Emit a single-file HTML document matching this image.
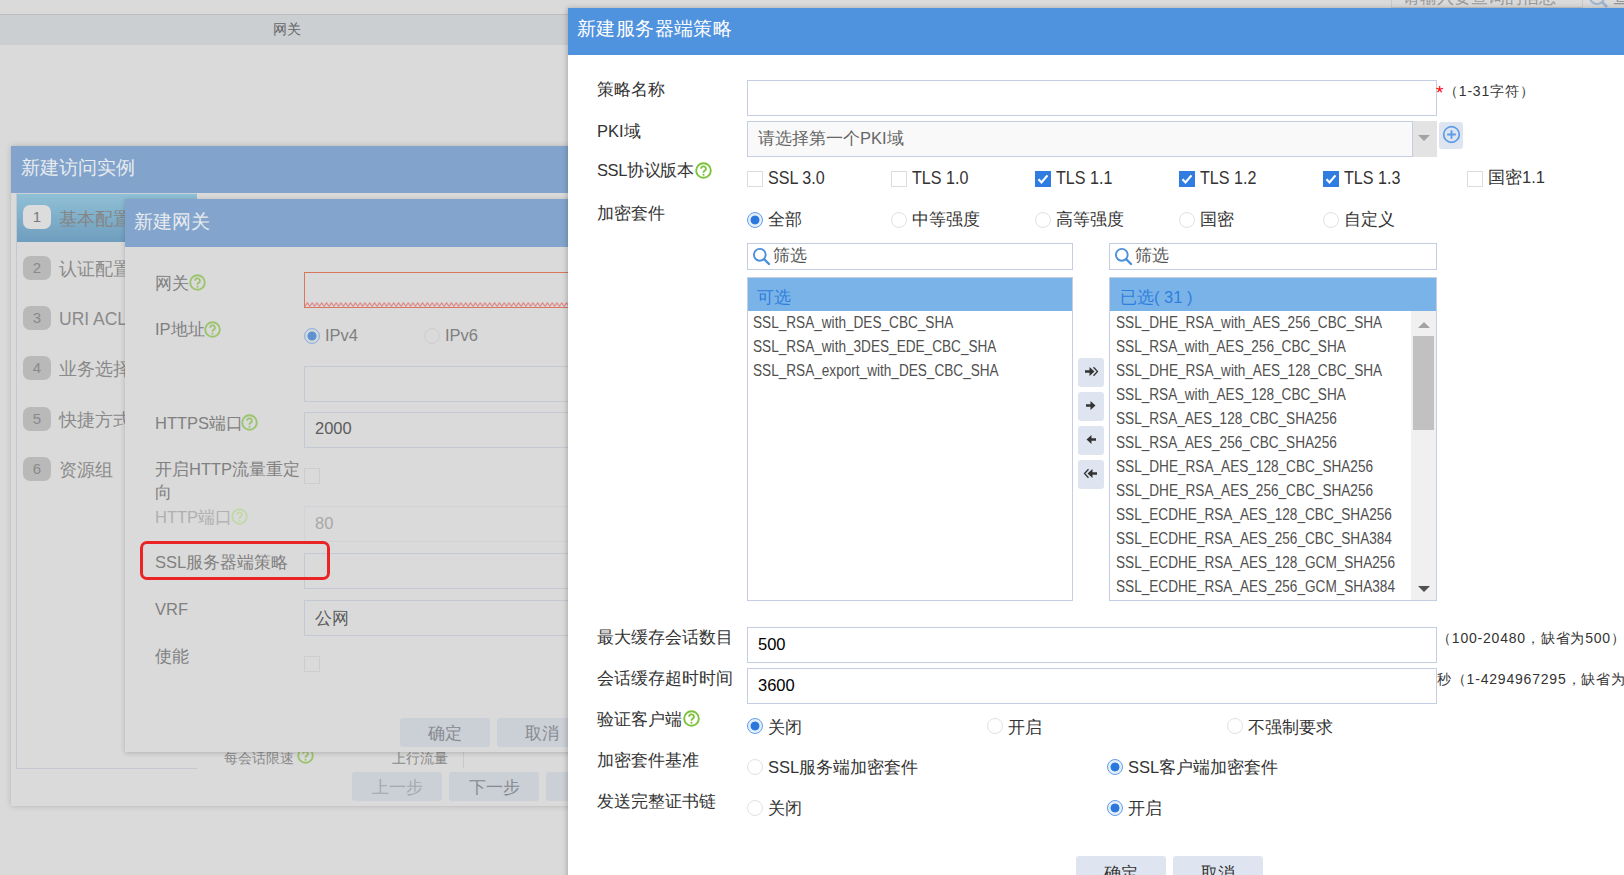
<!DOCTYPE html>
<html><head><meta charset="utf-8">
<style>
*{box-sizing:border-box;margin:0;padding:0}
html,body{width:1624px;height:875px;overflow:hidden;background:#dadada;font-family:"Liberation Sans",sans-serif}
.a{position:absolute;white-space:nowrap}
.t{position:absolute;white-space:nowrap;line-height:20px}
/* masked background */
.bgline{left:0;top:14px;width:1624px;height:1px;background:#bcbec0}
.band{left:0;top:15px;width:1624px;height:30px;background:#cbcfd2}
.dlg1{left:11px;top:146px;width:600px;height:660px;background:#dadada;box-shadow:0 0 6px rgba(0,0,0,.18)}
.hdr1{left:11px;top:146px;width:600px;height:47px;background:#82a4cc}
.mtitle{font-size:19.2px;color:#e8ebef}
.step{left:17px;top:194px;width:180px;height:48px;background:linear-gradient(#90c0d6,#6f9dbe)}
.badge{position:absolute;left:23px;width:28px;height:24px;border-radius:7px;background:#b9b9b9;color:#8a8a8a;font-size:15px;line-height:24px;text-align:center}
.stxt{font-size:17.5px;color:#8a8a8a;left:59px}
.dlg2{left:125px;top:199px;width:500px;height:553px;background:#dadada;box-shadow:0 1px 5px rgba(0,0,0,.2)}
.hdr2{left:125px;top:199px;width:500px;height:48px;background:#83a5cd}
.ml{font-size:16.5px;color:#808080;left:155px}
.minp{position:absolute;left:304px;width:300px;height:36px;border:1px solid #c3c8d2;background:#dadada}
.help{position:absolute;width:17px;height:17px;border-radius:50%;border:2px solid #9cc36e;color:#9cc36e;font-size:12px;line-height:13px;text-align:center;font-weight:bold}
.help:empty::after{content:"?"}
.mbtn{position:absolute;height:29px;border-radius:3px;background:#cbcfd6;color:#868a90;font-size:17px;line-height:31px;text-align:center}
/* main dialog */
.dlg{left:568px;top:8px;width:1100px;height:900px;background:#fff;box-shadow:-1px 0 5px rgba(0,0,0,.22)}
.hdr{left:568px;top:8px;width:1100px;height:47px;background:#4f92de}
.lbl{font-size:16.5px;color:#333;left:597px}
.inp{position:absolute;left:747px;width:690px;height:36px;border:1px solid #c5cde3;background:#fff}
.cb{position:absolute;width:16px;height:16px;border:1px solid #dcdcdc;background:#fff}
.cb.on{background:#2f7de1;border-color:#2f7de1}
.rd{position:absolute;width:16px;height:16px;border-radius:50%;border:1px solid #e2e2e2;background:#fff}
.rd.on{border:1.8px solid #629ee8;background:radial-gradient(circle,#2b78dd 0,#2b78dd 4.1px,#e4eefb 4.8px)}
.opt{font-size:16.5px;color:#333}
.filt{position:absolute;top:243px;height:27px;border:1px solid #c5cde3;background:#fff}
.list{position:absolute;top:277px;height:324px;border:1px solid #c5cde3;background:#fff;overflow:hidden}
.lh{position:absolute;left:-1px;top:-1px;right:-1px;height:34px;background:#7ab3e8}
.li{font-size:16px;color:#505050;transform:scaleX(0.85);transform-origin:0 0;margin-top:1px}
.abtn{position:absolute;left:1078px;width:26px;height:29px;border-radius:3px;background:#dfe5f0}
.btn{position:absolute;top:856px;width:90px;height:32px;border-radius:3px;background:#dfe5f0;color:#333;font-size:17px;text-align:center;line-height:36px}
.hint{font-size:14px;color:#333;letter-spacing:0.8px}
</style></head><body>
<!-- background page -->
<div class="a bgline"></div>
<div class="a band"></div>
<div class="t" style="left:273px;top:20px;font-size:13.5px;color:#666">网关</div>



<!-- top right search remnants -->
<div class="a" style="left:1391px;top:-4px;width:192px;height:12px;border:1px solid #c8c8c8;background:#dadada"></div>
<div class="t" style="left:1403px;top:-13px;font-size:16.5px;color:#9a9a9a">请输入要查询的信息</div>
<svg class="a" style="left:1587px;top:-12px" width="22" height="22" viewBox="0 0 22 22"><circle cx="10" cy="9" r="7" fill="none" stroke="#9db4d0" stroke-width="2"/><path d="M15 14l5 5" stroke="#9db4d0" stroke-width="2.5"/></svg>
<div class="t" style="left:1613px;top:-13px;font-size:16.5px;color:#8a8a8a">查询</div>
<div class="a" style="left:1582px;top:-4px;width:1px;height:12px;background:#c8c8c8"></div>

<!-- dialog 1 -->
<div class="a dlg1"></div>
<div class="a hdr1"></div>
<div class="t mtitle" style="left:21px;top:158px">新建访问实例</div>
<div class="a" style="left:16px;top:193px;width:1px;height:576px;background:#c4c7d1"></div>
<div class="a" style="left:16px;top:768px;width:181px;height:1px;background:#c4c7d1"></div>
<div class="a" style="left:17px;top:193px;width:180px;height:1px;background:#c9d2db"></div>
<div class="a step"></div>
<div class="badge" style="top:205px;background:#dcdcdc;color:#7a7a7a">1</div>
<div class="t stxt" style="top:209px;color:#858585">基本配置</div>
<div class="badge" style="top:256px">2</div><div class="t stxt" style="top:259px">认证配置</div>
<div class="badge" style="top:306px">3</div><div class="t stxt" style="top:309px">URI ACL</div>
<div class="badge" style="top:356px">4</div><div class="t stxt" style="top:359px">业务选择</div>
<div class="badge" style="top:407px">5</div><div class="t stxt" style="top:410px">快捷方式</div>
<div class="badge" style="top:457px">6</div><div class="t stxt" style="top:460px">资源组</div>
<div class="t" style="left:224px;top:748px;font-size:14px;color:#8a8a8a">每会话限速</div>
<svg class="a" style="left:297px;top:747px" width="17" height="17" viewBox="0 0 17 17"><circle cx="8.5" cy="8.5" r="7.3" fill="none" stroke="#9cc36e" stroke-width="1.9"/><path d="M6.1 6.7a2.4 2.4 0 1 1 3.4 2.2c-.75.4-1 .8-1 1.6v.3" fill="none" stroke="#9cc36e" stroke-width="1.8"/><circle cx="8.5" cy="12.7" r="1.05" fill="#9cc36e"/></svg>
<div class="t" style="left:392px;top:748px;font-size:14px;color:#8a8a8a">上行流量</div>
<div class="a" style="left:463px;top:751px;width:1px;height:17px;background:#c6c9ce"></div>
<div class="mbtn" style="left:352px;top:772px;width:90px;color:#a5a9ae">上一步</div>
<div class="mbtn" style="left:449px;top:772px;width:90px">下一步</div>
<div class="mbtn" style="left:546px;top:772px;width:89px"></div>

<!-- dialog 2 -->
<div class="a dlg2"></div>
<div class="a hdr2"></div>
<div class="t mtitle" style="left:134px;top:212px">新建网关</div>
<div class="t ml" style="top:273px">网关</div>
<svg class="a" style="left:189px;top:274px" width="17" height="17" viewBox="0 0 17 17"><circle cx="8.5" cy="8.5" r="7.3" fill="none" stroke="#9cc36e" stroke-width="1.9"/><path d="M6.1 6.7a2.4 2.4 0 1 1 3.4 2.2c-.75.4-1 .8-1 1.6v.3" fill="none" stroke="#9cc36e" stroke-width="1.8"/><circle cx="8.5" cy="12.7" r="1.05" fill="#9cc36e"/></svg>
<div class="minp" style="top:272px;border-color:#d8765e;height:36px"></div>
<svg class="a" style="left:305px;top:302px" width="263" height="5" viewBox="0 0 263 5"><defs><pattern id="wv" width="4.8" height="5" patternUnits="userSpaceOnUse"><path d="M0 4.5L2.4 0.8L4.8 4.5" fill="none" stroke="#e07878" stroke-width="1"/></pattern></defs><rect width="263" height="5" fill="url(#wv)"/></svg>
<div class="t ml" style="top:319px">IP地址</div>
<svg class="a" style="left:204px;top:321px" width="17" height="17" viewBox="0 0 17 17"><circle cx="8.5" cy="8.5" r="7.3" fill="none" stroke="#9cc36e" stroke-width="1.9"/><path d="M6.1 6.7a2.4 2.4 0 1 1 3.4 2.2c-.75.4-1 .8-1 1.6v.3" fill="none" stroke="#9cc36e" stroke-width="1.8"/><circle cx="8.5" cy="12.7" r="1.05" fill="#9cc36e"/></svg>
<div class="a" style="left:304px;top:328px;width:16px;height:16px;border-radius:50%;border:1.5px solid #8fb0d9;background:radial-gradient(circle,#5d91d2 0,#5d91d2 4.2px,#dadada 4.9px,#dadada 5.6px,#c8d4e3 6.3px)"></div>
<div class="t ml" style="left:325px;top:325px">IPv4</div>
<div class="a" style="left:424px;top:328px;width:16px;height:16px;border-radius:50%;border:1px solid #cfcfcf"></div>
<div class="t ml" style="left:445px;top:325px">IPv6</div>
<div class="minp" style="top:366px"></div>
<div class="t ml" style="top:413px">HTTPS端口</div>
<svg class="a" style="left:241px;top:414px" width="17" height="17" viewBox="0 0 17 17"><circle cx="8.5" cy="8.5" r="7.3" fill="none" stroke="#9cc36e" stroke-width="1.9"/><path d="M6.1 6.7a2.4 2.4 0 1 1 3.4 2.2c-.75.4-1 .8-1 1.6v.3" fill="none" stroke="#9cc36e" stroke-width="1.8"/><circle cx="8.5" cy="12.7" r="1.05" fill="#9cc36e"/></svg>
<div class="minp" style="top:412px"></div>
<div class="t" style="left:315px;top:418px;font-size:16.5px;color:#5c5c5c">2000</div>
<div class="t ml" style="top:459px">开启HTTP流量重定</div>
<div class="t ml" style="top:482px">向</div>
<div class="a" style="left:304px;top:468px;width:16px;height:16px;border:1px solid #cdcdcd"></div>
<div class="t ml" style="top:507px;color:#b0b0b0">HTTP端口</div>
<svg class="a" style="left:231px;top:508px" width="17" height="17" viewBox="0 0 17 17"><circle cx="8.5" cy="8.5" r="7.3" fill="none" stroke="#c2d8a8" stroke-width="1.9"/><path d="M6.1 6.7a2.4 2.4 0 1 1 3.4 2.2c-.75.4-1 .8-1 1.6v.3" fill="none" stroke="#c2d8a8" stroke-width="1.8"/><circle cx="8.5" cy="12.7" r="1.05" fill="#c2d8a8"/></svg>
<div class="minp" style="top:506px;border-color:#d0d3d8"></div>
<div class="t" style="left:315px;top:513px;font-size:16.5px;color:#a8a8a8">80</div>
<div class="t ml" style="top:552px">SSL服务器端策略</div>
<div class="minp" style="top:553px;height:36px"></div>
<div class="t ml" style="top:599px">VRF</div>
<div class="minp" style="top:600px"></div>
<div class="t" style="left:315px;top:608px;font-size:16.5px;color:#5c5c5c">公网</div>
<div class="t ml" style="top:646px">使能</div>
<div class="a" style="left:304px;top:656px;width:16px;height:16px;border:1px solid #cdcdcd"></div>
<div class="mbtn" style="left:400px;top:718px;width:90px">确定</div>
<div class="mbtn" style="left:497px;top:718px;width:90px">取消</div>
<div class="a" style="left:140px;top:541px;width:190px;height:39px;border:3px solid #ea2424;border-radius:7px"></div>

<!-- main dialog -->
<div class="a dlg"></div>
<div class="a hdr"></div>
<div class="t" style="left:577px;top:19px;font-size:19px;letter-spacing:0.4px;color:#fff">新建服务器端策略</div>

<div class="t lbl" style="top:79px">策略名称</div>
<div class="inp" style="top:80px"></div>
<div class="t" style="left:1436px;top:83px;font-size:19px;color:#f00">*</div>
<div class="t hint" style="left:1444px;top:81px">（1-31字符）</div>

<div class="t lbl" style="top:121px">PKI域</div>
<div class="inp" style="top:121px;background:#f9f9f9;width:666px"></div>
<div class="a" style="left:1413px;top:121px;width:24px;height:36px;background:#e3e3e3"></div>
<div class="a" style="left:1418px;top:135px;width:0;height:0;border-left:6px solid transparent;border-right:6px solid transparent;border-top:6px solid #a3a3a3"></div>
<div class="t" style="left:758px;top:128px;font-size:16.5px;color:#666">请选择第一个PKI域</div>
<div class="a" style="left:1439px;top:122px;width:24px;height:27px;border-radius:3px;background:#dfe5f0"></div>
<svg class="a" style="left:1442px;top:125px" width="19" height="19" viewBox="0 0 19 19"><circle cx="9.5" cy="9.5" r="7.8" fill="none" stroke="#5b9be5" stroke-width="1.7"/><path d="M9.5 5.2v8.6M5.2 9.5h8.6" stroke="#5b9be5" stroke-width="1.8"/></svg>

<div class="t lbl" style="top:160px;letter-spacing:-0.4px">SSL协议版本</div>
<svg class="a" style="left:695px;top:162px" width="17" height="17" viewBox="0 0 17 17"><circle cx="8.5" cy="8.5" r="7.3" fill="none" stroke="#7cc23a" stroke-width="1.9"/><path d="M6.1 6.7a2.4 2.4 0 1 1 3.4 2.2c-.75.4-1 .8-1 1.6v.3" fill="none" stroke="#7cc23a" stroke-width="1.8"/><circle cx="8.5" cy="12.7" r="1.05" fill="#7cc23a"/></svg>
<div class="cb" style="left:747px;top:171px"></div>
<div class="t opt" style="left:768px;top:168px;font-size:17.5px;transform:scaleX(0.92);transform-origin:0 0">SSL 3.0</div>
<div class="cb" style="left:891px;top:171px"></div>
<div class="t opt" style="left:912px;top:168px;font-size:17.5px;transform:scaleX(0.92);transform-origin:0 0">TLS 1.0</div>
<div class="cb on" style="left:1035px;top:171px"><svg width="14" height="14" viewBox="0 0 14 14" style="position:absolute;left:0;top:0"><path d="M2.5 7.2l3 3.2 6-7" fill="none" stroke="#fff" stroke-width="2.2"/></svg></div>
<div class="t opt" style="left:1056px;top:168px;font-size:17.5px;transform:scaleX(0.92);transform-origin:0 0">TLS 1.1</div>
<div class="cb on" style="left:1179px;top:171px"><svg width="14" height="14" viewBox="0 0 14 14" style="position:absolute;left:0;top:0"><path d="M2.5 7.2l3 3.2 6-7" fill="none" stroke="#fff" stroke-width="2.2"/></svg></div>
<div class="t opt" style="left:1200px;top:168px;font-size:17.5px;transform:scaleX(0.92);transform-origin:0 0">TLS 1.2</div>
<div class="cb on" style="left:1323px;top:171px"><svg width="14" height="14" viewBox="0 0 14 14" style="position:absolute;left:0;top:0"><path d="M2.5 7.2l3 3.2 6-7" fill="none" stroke="#fff" stroke-width="2.2"/></svg></div>
<div class="t opt" style="left:1344px;top:168px;font-size:17.5px;transform:scaleX(0.92);transform-origin:0 0">TLS 1.3</div>
<div class="cb" style="left:1467px;top:171px"></div>
<div class="t opt" style="left:1488px;top:167px">国密1.1</div>
<div class="t lbl" style="top:203px">加密套件</div>
<div class="rd on" style="left:747px;top:212px"></div>
<div class="t opt" style="left:768px;top:209px">全部</div>
<div class="rd" style="left:891px;top:212px"></div>
<div class="t opt" style="left:912px;top:209px">中等强度</div>
<div class="rd" style="left:1035px;top:212px"></div>
<div class="t opt" style="left:1056px;top:209px">高等强度</div>
<div class="rd" style="left:1179px;top:212px"></div>
<div class="t opt" style="left:1200px;top:209px">国密</div>
<div class="rd" style="left:1323px;top:212px"></div>
<div class="t opt" style="left:1344px;top:209px">自定义</div>
<div class="filt" style="left:747px;width:326px"><svg width="19" height="19" viewBox="0 0 19 19" style="position:absolute;left:4px;top:3px"><circle cx="7.8" cy="7.8" r="5.9" fill="none" stroke="#4b8fdb" stroke-width="1.9"/><path d="M12 12l5 5" stroke="#4b8fdb" stroke-width="2.4" stroke-linecap="round"/></svg><div class="t" style="left:25px;top:1px;font-size:16.5px;color:#555">筛选</div></div>
<div class="filt" style="left:1109px;width:328px"><svg width="19" height="19" viewBox="0 0 19 19" style="position:absolute;left:4px;top:3px"><circle cx="7.8" cy="7.8" r="5.9" fill="none" stroke="#4b8fdb" stroke-width="1.9"/><path d="M12 12l5 5" stroke="#4b8fdb" stroke-width="2.4" stroke-linecap="round"/></svg><div class="t" style="left:25px;top:1px;font-size:16.5px;color:#555">筛选</div></div>
<div class="list" style="left:747px;width:326px"><div class="lh"></div><div class="t" style="left:9px;top:9px;font-size:16.5px;color:#2f7fdc">可选</div>
<div class="t li" style="left:5px;top:34px">SSL_RSA_with_DES_CBC_SHA</div>
<div class="t li" style="left:5px;top:58px">SSL_RSA_with_3DES_EDE_CBC_SHA</div>
<div class="t li" style="left:5px;top:82px">SSL_RSA_export_with_DES_CBC_SHA</div>
</div>
<div class="list" style="left:1109px;width:328px"><div class="lh"></div><div class="t" style="left:10px;top:9px;font-size:16.5px;color:#2f7fdc">已选( 31 )</div>
<div class="t li" style="left:6px;top:34px">SSL_DHE_RSA_with_AES_256_CBC_SHA</div>
<div class="t li" style="left:6px;top:58px">SSL_RSA_with_AES_256_CBC_SHA</div>
<div class="t li" style="left:6px;top:82px">SSL_DHE_RSA_with_AES_128_CBC_SHA</div>
<div class="t li" style="left:6px;top:106px">SSL_RSA_with_AES_128_CBC_SHA</div>
<div class="t li" style="left:6px;top:130px">SSL_RSA_AES_128_CBC_SHA256</div>
<div class="t li" style="left:6px;top:154px">SSL_RSA_AES_256_CBC_SHA256</div>
<div class="t li" style="left:6px;top:178px">SSL_DHE_RSA_AES_128_CBC_SHA256</div>
<div class="t li" style="left:6px;top:202px">SSL_DHE_RSA_AES_256_CBC_SHA256</div>
<div class="t li" style="left:6px;top:226px">SSL_ECDHE_RSA_AES_128_CBC_SHA256</div>
<div class="t li" style="left:6px;top:250px">SSL_ECDHE_RSA_AES_256_CBC_SHA384</div>
<div class="t li" style="left:6px;top:274px">SSL_ECDHE_RSA_AES_128_GCM_SHA256</div>
<div class="t li" style="left:6px;top:298px">SSL_ECDHE_RSA_AES_256_GCM_SHA384</div>
<div class="t li" style="left:6px;top:322px">SSL_ECDHE_RSA_AES_256_GCM_SHA384</div>
<div class="a" style="left:301px;top:33px;width:25px;height:289px;background:#f0f0f0"></div><div class="a" style="left:308px;top:44px;width:0;height:0;border-left:6px solid transparent;border-right:6px solid transparent;border-bottom:6px solid #a3a3a3"></div><div class="a" style="left:303px;top:58px;width:21px;height:94px;background:#c1c1c1"></div><div class="a" style="left:308px;top:308px;width:0;height:0;border-left:6px solid transparent;border-right:6px solid transparent;border-top:6px solid #505050"></div></div>
<div class="abtn" style="top:358px"><svg width="16" height="13" viewBox="0 0 16 13" style="position:absolute;left:5px;top:6.5px"><path d="M2 5.2h4.5V2l5 4.5-5 4.5V7.8H2z" fill="#333"/><path d="M10.5 2.2l4 4.3-4 4.3" fill="none" stroke="#333" stroke-width="1.3"/></svg></div>
<div class="abtn" style="top:392px"><svg width="16" height="13" viewBox="0 0 16 13" style="position:absolute;left:5px;top:6.5px"><path d="M3 5.2h4.5V2l5 4.5-5 4.5V7.8H3z" fill="#333"/></svg></div>
<div class="abtn" style="top:426px"><svg width="16" height="13" viewBox="0 0 16 13" style="position:absolute;left:5px;top:6.5px"><path d="M13 5.2H8.5V2l-5 4.5 5 4.5V7.8H13z" fill="#333"/></svg></div>
<div class="abtn" style="top:460px"><svg width="16" height="13" viewBox="0 0 16 13" style="position:absolute;left:5px;top:6.5px"><path d="M14 5.2H9.5V2l-5 4.5 5 4.5V7.8H14z" fill="#333"/><path d="M5.5 2.2l-4 4.3 4 4.3" fill="none" stroke="#333" stroke-width="1.3"/></svg></div>

<div class="t lbl" style="top:627px">最大缓存会话数目</div>
<div class="inp" style="top:627px"></div>
<div class="t" style="left:758px;top:634px;font-size:16.5px;color:#000">500</div>
<div class="t hint" style="left:1437px;top:628px">（100-20480，缺省为500）</div>
<div class="t lbl" style="top:668px">会话缓存超时时间</div>
<div class="inp" style="top:668px"></div>
<div class="t" style="left:758px;top:675px;font-size:16.5px;color:#000">3600</div>
<div class="t hint" style="left:1437px;top:669px">秒（1-4294967295，缺省为3600）</div>

<div class="t lbl" style="top:709px">验证客户端</div>
<svg class="a" style="left:683px;top:710px" width="17" height="17" viewBox="0 0 17 17"><circle cx="8.5" cy="8.5" r="7.3" fill="none" stroke="#7cc23a" stroke-width="1.9"/><path d="M6.1 6.7a2.4 2.4 0 1 1 3.4 2.2c-.75.4-1 .8-1 1.6v.3" fill="none" stroke="#7cc23a" stroke-width="1.8"/><circle cx="8.5" cy="12.7" r="1.05" fill="#7cc23a"/></svg>
<div class="rd on" style="left:747px;top:718px"></div><div class="t opt" style="left:768px;top:717px">关闭</div>
<div class="rd" style="left:987px;top:718px"></div><div class="t opt" style="left:1008px;top:717px">开启</div>
<div class="rd" style="left:1227px;top:718px"></div><div class="t opt" style="left:1248px;top:717px">不强制要求</div>

<div class="t lbl" style="top:750px">加密套件基准</div>
<div class="rd" style="left:747px;top:759px"></div><div class="t opt" style="left:768px;top:757px">SSL服务端加密套件</div>
<div class="rd on" style="left:1107px;top:759px"></div><div class="t opt" style="left:1128px;top:757px">SSL客户端加密套件</div>

<div class="t lbl" style="top:791px">发送完整证书链</div>
<div class="rd" style="left:747px;top:800px"></div><div class="t opt" style="left:768px;top:798px">关闭</div>
<div class="rd on" style="left:1107px;top:800px"></div><div class="t opt" style="left:1128px;top:798px">开启</div>

<div class="btn" style="left:1076px">确定</div>
<div class="btn" style="left:1173px">取消</div>

</body></html>
